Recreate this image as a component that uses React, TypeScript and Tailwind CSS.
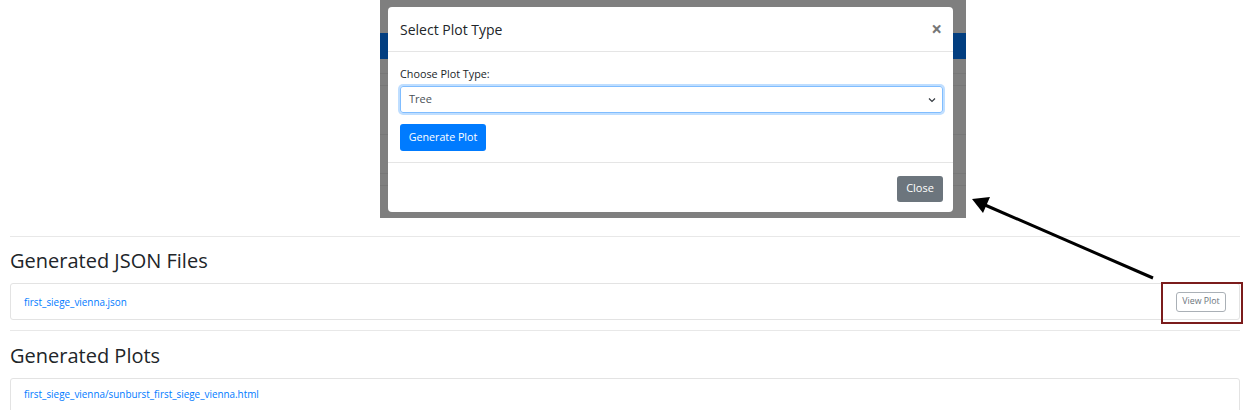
import React from "react";

export default function App() {
  return (
    <div className="relative w-[1245px] h-[410px] overflow-hidden bg-white text-[#212529]" style={{ fontFamily: '"Open Sans", "Noto Sans", sans-serif' }}>
      {/* embedded modal screenshot */}
      <div className="ml-[380px] w-[586px] h-[218px] relative bg-[#7f7f7f]">
        <div className="h-[33px]" />
        <div className="h-[26px] bg-[#023e80]" />
        <div className="h-[15px] border-b border-[#777]" />
        <div className="h-[12px] border-b border-[#777]" />
        <div className="h-[49px] border-b border-[#777]" />
        <div className="h-[39px] border-b border-[#777]" />
        <div className="h-[12px] border-b border-[#777]" />

        <div className="absolute left-[8px] top-[7px] w-[565px] h-[205px] bg-white rounded-[4px] flex flex-col">
          <div className="h-[45px] flex items-center justify-between px-[12px] border-b border-[#e5e5e5]">
            <span className="text-[14px] leading-none mt-[1px]">Select Plot Type</span>
            <span className="text-[19px] font-bold text-[#777] leading-none mr-[-1px]">×</span>
          </div>
          <div className="flex flex-col px-[12px] pt-[14px] h-[111px] border-b border-[#e5e5e5]">
            <span className="text-[10.8px] leading-[16px]">Choose Plot Type:</span>
            <div className="mt-[4px] h-[27px] w-[543px] rounded-[3px] border border-[#80bdff] shadow-[0_0_0_2px_rgba(0,123,255,0.25)] flex items-center justify-between pl-[8px] pr-[6px]">
              <span className="text-[11px] text-[#495057]">Tree</span>
              <svg width="8" height="6" viewBox="0 0 8 6" className="mt-[1px]"><path d="M1 1.5 L4 4.5 L7 1.5" fill="none" stroke="#343a40" strokeWidth="1.2" /></svg>
            </div>
            <div className="mt-[11px] w-[86px] h-[27px] rounded-[3px] bg-[#007bff] text-white text-[10.7px] flex items-center justify-center">Generate Plot</div>
          </div>
          <div className="flex-1 flex items-center justify-end px-[10px] pt-[2px]">
            <div className="w-[46px] h-[26px] rounded-[3px] bg-[#6c757d] text-white text-[11px] flex items-center justify-center">Close</div>
          </div>
        </div>
      </div>

      {/* page */}
      <div className="px-[10px] pr-[5px]">
        <div className="mt-[18px] border-t border-[#e8e8e8]" />
        <h2 className="mt-[11px] text-[20px] leading-[26px]">Generated JSON Files</h2>
        <div className="mt-[9px] h-[37px] border border-[#e3e3e3] rounded-[3px] flex items-center justify-between pl-[13px] pr-[13px]">
          <span className="text-[9.9px] text-[#007bff] mt-[1px]">first_siege_vienna.json</span>
          <div className="w-[50px] h-[20px] rounded-[3px] border border-[#aab0b6] text-[8.8px] text-[#6c757d] flex items-center justify-center">View Plot</div>
        </div>
        <div className="mt-[10px] border-t border-[#e8e8e8]" />
        <h2 className="mt-[12px] text-[20px] leading-[26px]">Generated Plots</h2>
        <div className="mt-[9px] h-[37px] border border-[#e3e3e3] rounded-[3px] flex items-start pt-[8px] pl-[13px]">
          <span className="text-[9.9px] text-[#007bff]">first_siege_vienna/sunburst_first_siege_vienna.html</span>
        </div>
      </div>

      {/* annotations */}
      <div className="absolute left-[1161px] top-[282px] w-[82px] h-[42px] border-2 border-[#7b1c1c]" />
      <svg className="absolute left-0 top-0" width="1245" height="410">
        <line x1="1153" y1="278" x2="985" y2="205" stroke="#000" strokeWidth="3" />
        <polygon points="972,199 990,197 983,213" fill="#000" />
      </svg>
    </div>
  );
}
